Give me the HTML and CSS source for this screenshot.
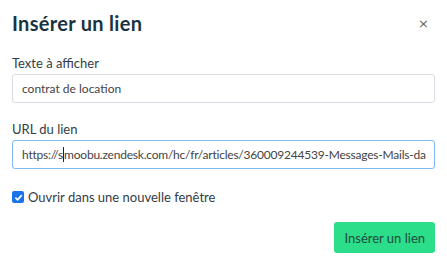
FILE: index.html
```html
<!DOCTYPE html>
<html lang="fr">
<head>
    <meta charset="UTF-8">
    <title>Insérer un lien</title>
    <link rel="stylesheet" href="styles.css">
</head>
<body>
    <div class="modal">
        <div class="modal-header">
            <h2>Insérer un lien</h2>
            <span class="close-btn">&times;</span>
        </div>
        <div class="field">
            <label for="linkText">Texte à afficher</label>
            <div class="input">contrat de location</div>
        </div>
        <div class="field">
            <label for="linkUrl">URL du lien</label>
            <div class="input focused">https://s<span class="caret"></span>moobu.zendesk.com/hc/fr/articles/360009244539-Messages-Mails-da</div>
        </div>
        <div class="check-row">
            <span class="checkbox">
                <svg width="9" height="9" viewBox="0 0 10 10"><path d="M1.5 5.2 L4 7.6 L8.6 2.4" fill="none" stroke="#fff" stroke-width="1.9"/></svg>
            </span>
            <span>Ouvrir dans une nouvelle fenêtre</span>
        </div>
        <div class="modal-footer">
            <button class="submit-btn">Insérer un lien</button>
        </div>
    </div>
</body>
</html>
```

FILE: styles.css
```css
body {
    margin: 0;
    font-family: Lato, "Open Sans", sans-serif;
    background: #fff;
    color: #333d45;
}

.modal {
    padding: 10px 12px 10px 12px;
}

.modal-header {
    display: flex;
    justify-content: space-between;
    align-items: center;
    height: 26px;
    margin-bottom: 19px;
}

.modal-header h2 {
    margin: 0;
    font-size: 20px;
    font-weight: 700;
    color: #1b3341;
    letter-spacing: 0.3px;
}

.close-btn {
    font-family: "DejaVu Sans", sans-serif;
    font-size: 13px;
    color: #666;
    margin-right: 6px;
}

.field {
    margin-bottom: 18px;
}

.field label {
    display: block;
    font-size: 13px;
    line-height: 16px;
    margin-bottom: 3px;
    color: #333d45;
}

.input {
    height: 27px;
    border: 1px solid #d9dee4;
    border-radius: 3px;
    padding: 0 9px;
    font-size: 12px;
    line-height: 27px;
    color: #444;
    white-space: nowrap;
    overflow: hidden;
}

.input.focused {
    border-color: #80b9f4;
    letter-spacing: -0.22px;
}

.caret {
    display: inline-block;
    width: 1px;
    height: 15px;
    background: #222;
    vertical-align: -3px;
}

.check-row {
    display: flex;
    align-items: center;
    gap: 4px;
    margin-top: 20px;
    font-size: 13px;
    color: #333d45;
}

.checkbox {
    width: 12px;
    height: 12px;
    border-radius: 2px;
    background: #1a73e8;
    display: flex;
    align-items: center;
    justify-content: center;
}

.modal-footer {
    display: flex;
    justify-content: flex-end;
    margin-top: 17px;
}

.submit-btn {
    font-family: inherit;
    background: #2cde8a;
    color: #1d4b3c;
    border: none;
    border-radius: 3px;
    font-size: 13px;
    padding: 0 10px;
    height: 31px;
}
```
